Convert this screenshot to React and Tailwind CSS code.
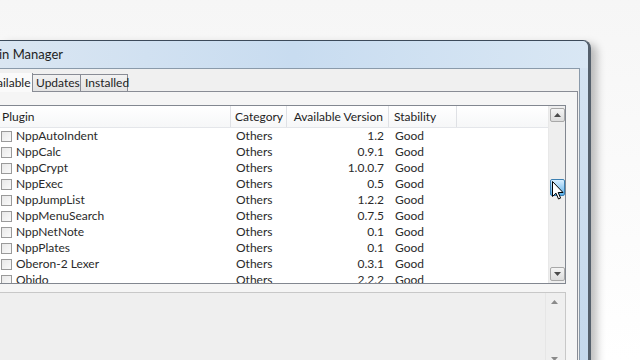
import React from 'react'

const PLUGINS = [
  ['NppAutoIndent', 'Others', '1.2', 'Good'],
  ['NppCalc', 'Others', '0.9.1', 'Good'],
  ['NppCrypt', 'Others', '1.0.0.7', 'Good'],
  ['NppExec', 'Others', '0.5', 'Good'],
  ['NppJumpList', 'Others', '1.2.2', 'Good'],
  ['NppMenuSearch', 'Others', '0.7.5', 'Good'],
  ['NppNetNote', 'Others', '0.1', 'Good'],
  ['NppPlates', 'Others', '0.1', 'Good'],
  ['Oberon-2 Lexer', 'Others', '0.3.1', 'Good'],
  ['Objdo', 'Others', '2.2.2', 'Good'],
]

function ArrowBtn({ down }) {
  return (
    <div className="w-[15px] h-[14px] border border-[#a8a8a8] rounded-[2px] bg-gradient-to-b from-[#f4f4f4] to-[#dcdcdc] flex items-center justify-center">
      <svg width="7" height="4" viewBox="0 0 7 4">
        <path d={down ? 'M0 0 L7 0 L3.5 4 Z' : 'M0 4 L7 4 L3.5 0 Z'} fill="#4a4a4a" />
      </svg>
    </div>
  )
}

export default function App() {
  return (
    <div className="w-[640px] h-[360px] overflow-hidden bg-gradient-to-b from-[#f6f6f6] to-white relative" style={{ fontFamily: 'Lato, "Noto Sans", sans-serif' }}>
      <div className="pt-[40px]">
        {/* window */}
        <div className="w-[591px] h-[330px] rounded-tr-[8px] border-t border-r-[3px] border-t-[#3c4a5a] border-r-[#55606c] bg-gradient-to-b from-[#d6e4f2] to-[#c4d8ec] shadow-[6px_4px_8px_rgba(0,0,0,0.25)]">
          {/* title */}
          <div className="h-[27px] flex items-center text-[13px] text-[#1e1e1e] bg-gradient-to-r from-[#dae6f2] via-[#c8dcf0] to-[#d9e7f4] rounded-tr-[6px]">
            <span className="-ml-[1px] leading-none">in Manager</span>
          </div>
          {/* client */}
          <div className="mr-[8px] h-[303px] bg-[#f0f0f0] border-r border-t border-[#8a9aaa]">
            {/* tabs */}
            <div className="pt-[4px] flex items-end text-[12px] text-[#1e1e1e] h-[22px]">
              <div className="h-[19px] w-[33px] bg-[#fafafa] border-r border-[#898c95] flex items-center relative z-10 -mb-px overflow-hidden">
                <span className="-ml-[3px] whitespace-nowrap">ailable</span>
              </div>
              <div className="h-[17px] w-[48px] pl-[3px] bg-gradient-to-b from-[#f2f2f2] to-[#e3e3e3] border border-l-0 border-b-0 border-[#898c95] flex items-center whitespace-nowrap">Updates</div>
              <div className="h-[17px] w-[47px] pl-[4px] bg-gradient-to-b from-[#f2f2f2] to-[#e3e3e3] border border-l-0 border-b-0 border-[#898c95] flex items-center whitespace-nowrap">Installed</div>
            </div>
            {/* tab panel */}
            <div className="w-[578px] h-[278px] border-t border-r border-[#898c95] bg-[#f5f5f5] pt-[13px]">
              {/* list */}
              <div className="w-[566px] h-[179px] border border-l-0 border-[#828790] bg-white flex">
                <div className="flex-1 overflow-hidden">
                  <div className="h-[22px] flex text-[12px] text-[#1e1e1e] border-b border-[#e4e6ea] bg-gradient-to-b from-white to-[#f6f7f8]">
                    <div className="w-[231px] pl-[2px] flex items-center border-r border-[#dfe1e5]">Plugin</div>
                    <div className="w-[56px] pl-[4px] flex items-center border-r border-[#dfe1e5]">Category</div>
                    <div className="w-[102px] pr-[5px] flex items-center justify-end border-r border-[#dfe1e5] whitespace-nowrap">Available Version</div>
                    <div className="w-[68px] pl-[5px] flex items-center border-r border-[#dfe1e5]">Stability</div>
                  </div>
                  <div>
                    {PLUGINS.map(([name, cat, ver, stab]) => (
                      <div key={name} className="h-[16px] flex items-center text-[12px] text-[#2a2a2a]">
                        <div className="w-[231px] flex items-center">
                          <div className="w-[11px] h-[11px] ml-[1px] border border-[#9a9a9a] bg-gradient-to-br from-[#e8e8e8] to-[#fafafa]" />
                          <span className="ml-[4px]">{name}</span>
                        </div>
                        <div className="w-[56px] pl-[5px]">{cat}</div>
                        <div className="w-[102px] pr-[5px] text-right">{ver}</div>
                        <div className="pl-[6px]">{stab}</div>
                      </div>
                    ))}
                  </div>
                </div>
                {/* scrollbar */}
                <div className="w-[17px] bg-[#eeeeee] border-l border-[#e8e8e8] pt-[2px] flex flex-col items-center relative">
                  <ArrowBtn />
                  <div className="absolute top-[73px] left-[1px] w-[15px] h-[17px] rounded-[2px] border border-[#3c7fb1] bg-gradient-to-b from-[#d9efff] to-[#5aaee6]" />
                  <div className="mt-auto mb-[2px]">
                    <ArrowBtn down />
                  </div>
                  <svg className="absolute top-[75px] left-[3px]" width="12" height="19" viewBox="0 0 12 19">
                    <path d="M0.5 0.5 L0.5 15.5 L4 12.2 L6.5 18 L8.6 17.1 L6.2 11.5 L11 11.5 Z" fill="#fff" stroke="#000" strokeWidth="1" strokeLinejoin="round" />
                  </svg>
                </div>
              </div>
              {/* description box */}
              <div className="mt-[8px] w-[566px] h-[80px] border-t border-r border-[#c8c8c8] bg-[#efefef] flex justify-end">
                <div className="w-[17px] mr-[3px] flex flex-col items-center justify-between py-[7px] border-l border-[#e6e6e6]">
                  <svg width="7" height="4" viewBox="0 0 7 4"><path d="M0 4 L7 4 L3.5 0 Z" fill="#8a8a8a" /></svg>
                  <svg width="7" height="4" viewBox="0 0 7 4" className="mb-[4px]"><path d="M0 0 L7 0 L3.5 4 Z" fill="#8a8a8a" /></svg>
                </div>
              </div>
            </div>
          </div>
        </div>
      </div>
    </div>
  )
}
